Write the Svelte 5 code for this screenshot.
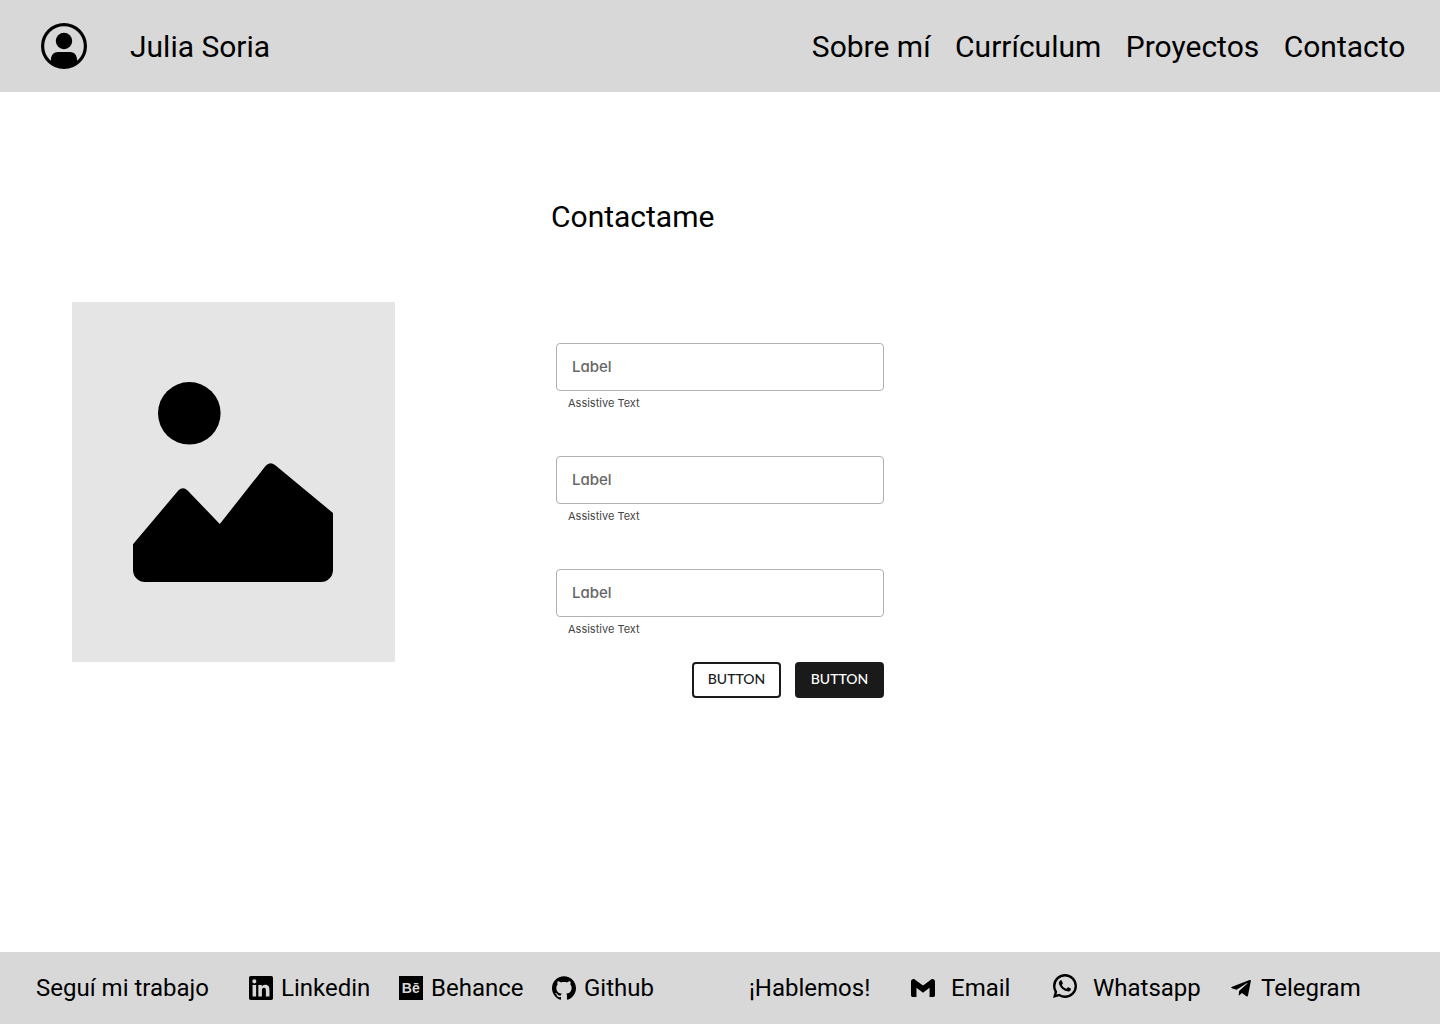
<script>
  const nav = ['Sobre mí', 'Currículum', 'Proyectos', 'Contacto'];
  const fields = [1, 2, 3];
</script>

<div class="page">
  <header>
    <svg class="avatar" viewBox="0 0 46 46" width="46" height="46">
      <circle cx="23" cy="23" r="21.400" fill="none" stroke="#000" stroke-width="3.200" />
      <circle cx="23" cy="18" r="8.200" />
      <path d="M9 39.500L10 36.500c0-4.500 2.800-7.500 7-7.500h12c4.200 0 7 3 7 7.500l1 3a22 22 0 0 1-28 0z" />
    </svg>
    <span class="name">Julia Soria</span>
    <nav>
      {#each nav as item}
        <span>{item}</span>
      {/each}
    </nav>
  </header>

  <main>
    <div class="picture">
      <svg viewBox="0 0 200 200" width="200" height="200">
        <circle cx="56.300" cy="31.300" r="31.300" />
        <path d="M0 162.300L45.300 108.500Q50 104 54.600 108.500L86.800 142L132.700 83.800Q137 79 142 83.100L200 131V188a12 12 0 0 1-12 12H12a12 12 0 0 1-12-12z" />
      </svg>
    </div>
    <section>
      <h1>Contactame</h1>
      <form>
        {#each fields as field (field)}
          <div class="field">
            <div class="box"><span>Label</span></div>
            <p>Assistive Text</p>
          </div>
        {/each}
        <div class="actions">
          <button type="button">BUTTON</button>
          <button type="button" class="primary">BUTTON</button>
        </div>
      </form>
    </section>
  </main>

  <footer>
    <span class="work">Seguí mi trabajo</span>
    <span class="link linkedin">
      <svg viewBox="0 0 24 24" width="24" height="24"><path d="M20.447 20.452h-3.554v-5.569c0-1.328-.027-3.037-1.852-3.037-1.853 0-2.136 1.445-2.136 2.939v5.667H9.351V9h3.414v1.561h.046c.477-.9 1.637-1.850 3.370-1.850 3.601 0 4.267 2.370 4.267 5.455v6.286zM5.337 7.433a2.062 2.062 0 0 1-2.063-2.065 2.064 2.064 0 1 1 2.063 2.065zm1.782 13.019H3.555V9h3.564v11.452zM22.225 0H1.771C.792 0 0 .774 0 1.729v20.542C0 23.227.792 24 1.771 24h20.451C23.200 24 24 23.227 24 22.271V1.729C24 .774 23.200 0 22.222 0h.003z" /></svg>
      Linkedin
    </span>
    <span class="link behance">
      <svg viewBox="0 0 24 24" width="24" height="24">
        <rect width="24" height="24" />
        <text x="2.800" y="17" textLength="18" lengthAdjust="spacingAndGlyphs">Bē</text>
      </svg>
      Behance
    </span>
    <span class="link github">
      <svg viewBox="0 0 24 24" width="24" height="24"><path d="M12 .297c-6.630 0-12 5.373-12 12 0 5.303 3.438 9.800 8.205 11.385.6.113.820-.258.820-.577 0-.285-.010-1.040-.015-2.040-3.338.724-4.042-1.610-4.042-1.610C4.422 18.070 3.633 17.700 3.633 17.700c-1.087-.744.084-.729.084-.729 1.205.084 1.838 1.236 1.838 1.236 1.070 1.835 2.809 1.305 3.495.998.108-.776.417-1.305.760-1.605-2.665-.300-5.466-1.332-5.466-5.930 0-1.310.465-2.380 1.235-3.220-.135-.303-.540-1.523.105-3.176 0 0 1.005-.322 3.300 1.230.960-.267 1.980-.399 3-.405 1.020.006 2.040.138 3 .405 2.280-1.552 3.285-1.230 3.285-1.230.645 1.653.240 2.873.120 3.176.765.840 1.230 1.910 1.230 3.220 0 4.610-2.805 5.625-5.475 5.920.420.360.810 1.096.810 2.220 0 1.606-.015 2.896-.015 3.286 0 .315.210.690.825.570C20.565 22.092 24 17.592 24 12.297c0-6.627-5.373-12-12-12" /></svg>
      Github
    </span>
    <span class="talk">¡Hablemos!</span>
    <span class="link email">
      <svg viewBox="0 0 24 24" width="24" height="24"><path d="M24 5.457v13.909c0 .904-.732 1.636-1.636 1.636h-3.819V11.730L12 16.640l-6.545-4.910v9.273H1.636A1.636 1.636 0 0 1 0 19.366V5.457c0-2.023 2.309-3.178 3.927-1.964L5.455 4.640 12 9.548l6.545-4.910 1.528-1.145C21.690 2.280 24 3.434 24 5.457z" /></svg>
      Email
    </span>
    <span class="link whatsapp">
      <svg viewBox="2 2 20 20" width="24" height="24"><path d="M7.253 18.494l.724.423A7.953 7.953 0 0 0 12 20a8 8 0 1 0-8-8c0 1.436.377 2.813 1.084 4.024l.422.724-.653 2.401 2.400-.655zM2.004 22l1.352-4.968A9.954 9.954 0 0 1 2 12C2 6.477 6.477 2 12 2s10 4.477 10 10-4.477 10-10 10a9.954 9.954 0 0 1-5.030-1.355L2.004 22zM8.391 7.308c.134-.010.269-.010.403-.004.054.004.108.010.162.016.159.018.334.115.393.249.298.676.588 1.357.868 2.040.062.152.025.347-.093.537a4.380 4.380 0 0 1-.263.372c-.113.145-.356.411-.356.411s-.099.118-.061.265c.014.056.060.137.102.205l.059.095c.256.427.600.860 1.020 1.268.120.116.237.235.363.346.468.413.998.750 1.570 1l.005.002c.085.037.128.057.252.110.062.026.126.049.191.066a.350.350 0 0 0 .367-.130c.724-.877.790-.934.796-.934v.002a.482.482 0 0 1 .378-.127c.060.004.121.015.177.040.531.243 1.400.622 1.400.622l.582.261c.098.047.187.158.190.265.004.067.010.175-.013.373-.032.259-.110.570-.188.733a1.155 1.155 0 0 1-.210.302 2.378 2.378 0 0 1-.330.288 3.710 3.710 0 0 1-.125.090 5.024 5.024 0 0 1-.383.220 1.990 1.990 0 0 1-.833.230c-.185.010-.370.024-.556.014-.008 0-.568-.087-.568-.087a9.448 9.448 0 0 1-3.840-2.046c-.226-.199-.435-.413-.649-.626-.890-.885-1.562-1.840-1.970-2.742A3.470 3.470 0 0 1 6.900 9.620a2.729 2.729 0 0 1 .564-1.680c.073-.094.142-.192.261-.305.127-.120.207-.184.294-.228a.961.961 0 0 1 .371-.100z" /></svg>
      Whatsapp
    </span>
    <span class="link telegram">
      <svg viewBox="0 0 20 17" width="20" height="17"><path d="M19.900.7 17 15.600c-.2 1-.8 1.200-1.600.7l-4.500-3.300-2.200 2.100c-.3.300-.5.500-1 .4l.4-4.600L16.400 3.400c.4-.3-.1-.5-.6-.200L5.500 9.700.900 8.300C-.1 8-.1 7.300 1.100 6.800L18.600.1c.9-.300 1.500.0 1.300.6z" /></svg>
      Telegram
    </span>
  </footer>
</div>

<style>
  :global(body) {
    margin: 0;
    background: #fff;
  }
  .page {
    display: flex;
    flex-direction: column;
    width: 1440px;
    height: 1024px;
    font-family: Roboto, sans-serif;
    color: #000;
  }
  svg {
    display: block;
    flex: none;
  }
  header {
    display: flex;
    align-items: center;
    box-sizing: border-box;
    height: 92px;
    padding: 0 34.6px 0 41px;
    background: #d8d8d8;
    font-size: 30px;
    white-space: nowrap;
  }
  .name {
    margin-left: 43px;
    padding-top: 1px;
  }
  nav {
    display: flex;
    gap: 24.5px;
    margin-left: auto;
    padding-top: 1px;
  }
  main {
    display: flex;
    flex: 1;
    align-items: flex-start;
    padding-left: 72px;
  }
  .picture {
    display: flex;
    box-sizing: border-box;
    width: 323px;
    height: 360px;
    margin-top: 210px;
    padding: 80px 62px 80px 61px;
    background: #e5e5e5;
  }
  section {
    width: 333px;
    margin: 107px 0 0 156px;
  }
  h1 {
    margin: 0;
    font-size: 30px;
    font-weight: 400;
    line-height: 36px;
  }
  form {
    width: 328px;
    margin: 108px 0 0 5px;
    font-family: Inter, sans-serif;
    font-feature-settings: 'cv11';
  }
  .field {
    height: 113px;
  }
  .box {
    display: flex;
    align-items: center;
    box-sizing: border-box;
    height: 48px;
    padding: 0 0 2px 15px;
    border: 1px solid #b0b0b0;
    border-radius: 4px;
    font-size: 15px;
    font-weight: 500;
    color: #666;
  }
  .field p {
    margin: 4px 0 0 12px;
    font-size: 11px;
    line-height: 16px;
    color: #444;
  }
  .actions {
    display: flex;
    justify-content: flex-end;
    gap: 14px;
    margin-top: -20px;
  }
  button {
    box-sizing: border-box;
    width: 89px;
    height: 36px;
    padding: 0 0 3px;
    border: 2px solid #1a1a1a;
    border-radius: 4px;
    background: #fff;
    font-family: Lato, sans-serif;
    font-size: 14px;
    font-weight: 500;
    color: #1a1a1a;
  }
  .primary {
    background: #1a1a1a;
    color: #fff;
  }
  footer {
    display: flex;
    align-items: center;
    box-sizing: border-box;
    height: 72px;
    padding-left: 36px;
    background: #d8d8d8;
    font-size: 24px;
    white-space: nowrap;
  }
  .work {
    width: 213px;
  }
  .link {
    display: flex;
    align-items: center;
    gap: 8px;
  }
  .linkedin {
    width: 150px;
  }
  .behance {
    width: 153px;
  }
  .behance text {
    fill: #d8d8d8;
    font-family: 'Liberation Sans', sans-serif;
    font-size: 15px;
    font-weight: 700;
  }
  .github {
    width: 197px;
  }
  .talk {
    width: 162px;
  }
  .email {
    gap: 16px;
    width: 142px;
  }
  .whatsapp {
    gap: 16px;
    width: 178px;
  }
  .whatsapp svg {
    margin-bottom: 4px;
  }
  .telegram {
    gap: 10px;
  }
</style>
